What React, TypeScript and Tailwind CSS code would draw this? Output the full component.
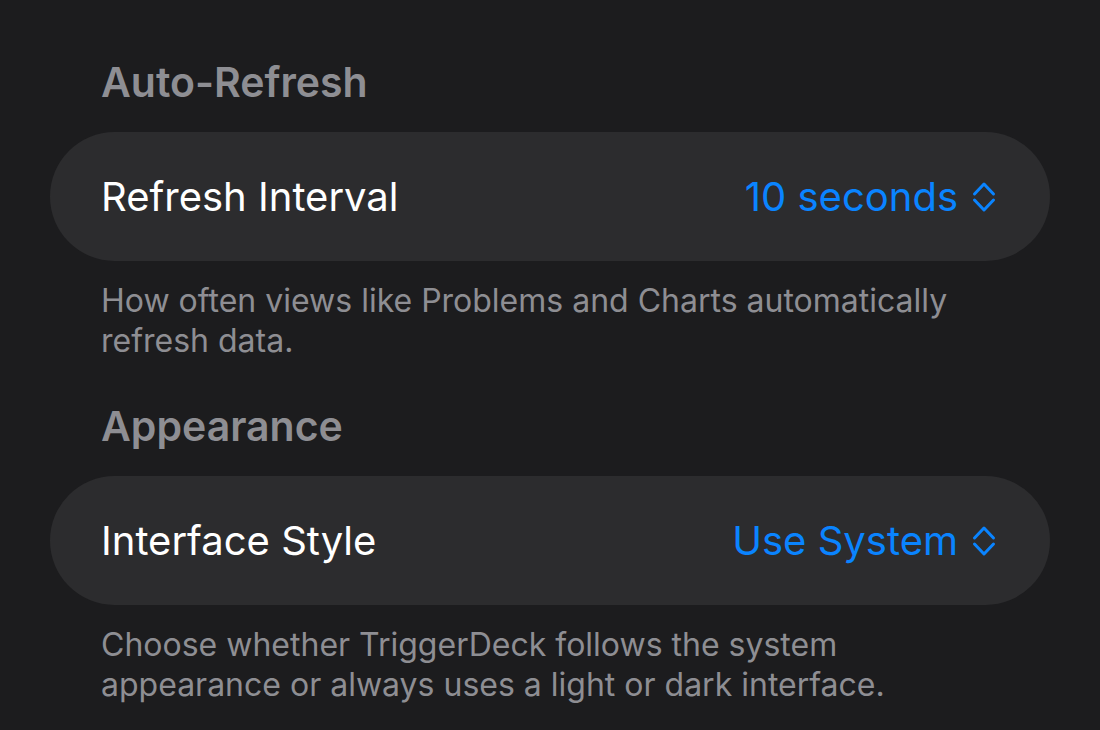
import React from "react";

const UpDown = () => (
  <svg width="24" height="32" viewBox="0 0 24 32" fill="none" stroke="currentColor" strokeWidth="3" strokeLinecap="round" strokeLinejoin="round">
    <path d="M2.5 13 L12 3 L21.5 13" />
    <path d="M2.5 19 L12 29 L21.5 19" />
  </svg>
);

const Section = ({ title, label, value, note }: { title: string; label: string; value: string; note: string }) => (
  <section>
    <h2 className="px-[51px] text-[41px] leading-[48px] font-semibold text-[#8e8e93] mb-[26px]">{title}</h2>
    <div className="h-[129px] rounded-full bg-[#2c2c2e] flex items-center justify-between pl-[51px] pr-[54px]">
      <span className="text-[40px] text-white">{label}</span>
      <span className="flex items-center gap-[14px] text-[40px] text-[#0a84ff]">
        {value}
        <UpDown />
      </span>
    </div>
    <p className="px-[51px] mt-[20px] text-[32px] leading-[40px] text-[#8e8e93]">{note}</p>
  </section>
);

export default function App() {
  return (
    <div className="w-[1100px] h-[730px] overflow-hidden bg-[#1c1c1e] px-[50px] pt-[58px] font-['Inter',sans-serif]">
      <div className="flex flex-col gap-[41px]">
        <Section
          title="Auto-Refresh"
          label="Refresh Interval"
          value="10 seconds"
          note="How often views like Problems and Charts automatically refresh data."
        />
        <Section
          title="Appearance"
          label="Interface Style"
          value="Use System"
          note="Choose whether TriggerDeck follows the system appearance or always uses a light or dark interface."
        />
      </div>
    </div>
  );
}
